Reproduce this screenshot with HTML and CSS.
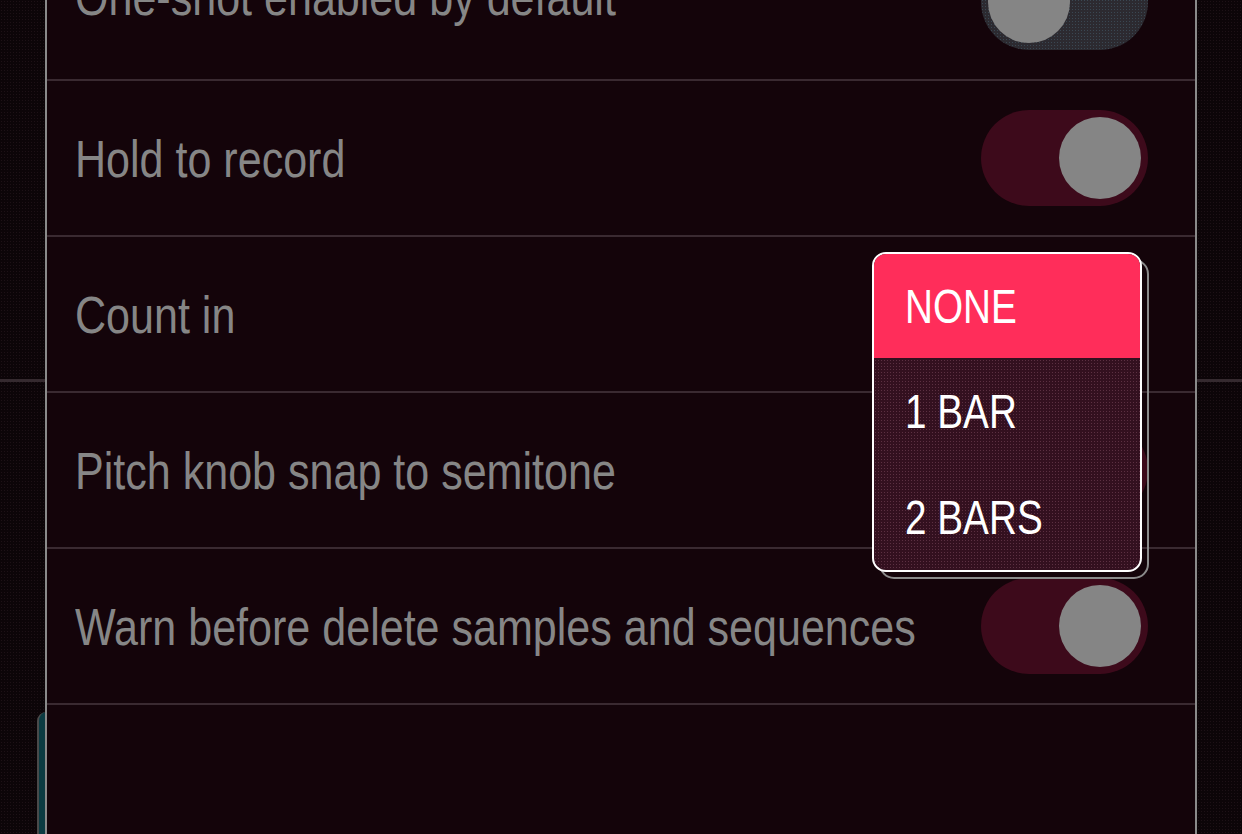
FILE: index.html
```html
<!DOCTYPE html>
<html lang="en">
<head>
<meta charset="utf-8">
<title>Settings</title>
<link rel="stylesheet" href="styles.css">
</head>
<body>
<div class="screen">
  <div class="backdrop">
    <div class="bg-header"></div>
    <div class="bg-body">
      <div class="bg-card"></div>
    </div>
  </div>

  <div class="modal">
    <div class="list">
      <div class="row row-first">
        <span class="label">One-shot enabled by default</span>
        <span class="toggle off"><span class="knob"></span></span>
      </div>
      <div class="row">
        <span class="label">Hold to record</span>
        <span class="toggle on"><span class="knob"></span></span>
      </div>
      <div class="row has-menu">
        <span class="label">Count in</span>
        <div class="menu-wrap">
          <div class="menu-echo"></div>
          <ul class="menu">
            <li class="item selected"><span class="item-text">NONE</span></li>
            <li class="item"><span class="item-text">1 BAR</span></li>
            <li class="item"><span class="item-text">2 BARS</span></li>
          </ul>
        </div>
      </div>
      <div class="row">
        <span class="label">Pitch knob snap to semitone</span>
        <span class="toggle on"><span class="knob"></span></span>
      </div>
      <div class="row">
        <span class="label">Warn before delete samples and sequences</span>
        <span class="toggle on"><span class="knob"></span></span>
      </div>
      <div class="row empty"></div>
    </div>
  </div>
</div>
</body>
</html>
```

FILE: styles.css
```css
* {
  box-sizing: border-box;
}

html, body {
  margin: 0;
  padding: 0;
  background: #0c0508;
  overflow: hidden;
}

.screen {
  position: relative;
  width: 1242px;
  height: 834px;
  overflow: hidden;
  font-family: "Liberation Sans", Arial, sans-serif;
}

/* background page behind the modal */
.backdrop {
  display: flex;
  flex-direction: column;
  height: 100%;
  background-color: #0c0508;
  background-image: radial-gradient(circle, rgba(60, 40, 50, 0.35) 0.6px, transparent 0.9px);
  background-size: 3px 3px;
}

.bg-header {
  flex-shrink: 0;
  height: 382px;
  border-bottom: 3px solid #352a2f;
}

.bg-body {
  flex: 1;
  min-height: 0;
  padding: 330px 0 0 37px;
}

.bg-card {
  width: 60px;
  height: 200px;
  background: #0b3b42;
  border-left: 2px solid #4a4a4a;
  border-radius: 9px 0 0 0;
}

/* modal panel */
.modal {
  position: absolute;
  top: 0;
  left: 45px;
  width: 1152px;
  height: 834px;
  background: #14040a;
  border-left: 2px solid #8a8a8a;
  border-right: 2px solid #8a8a8a;
  overflow: hidden;
}

.list {
  margin-top: -75px;
}

.row {
  position: relative;
  display: flex;
  align-items: center;
  height: 156px;
  padding: 0 47px 0 28px;
  border-bottom: 2px solid #3a2a31;
}

.row.empty {
  border-bottom: none;
}

/* condensed face: Liberation Sans compressed to a narrow width */
.label {
  flex: 1 1 0;
  min-width: 0;
  font-size: 52.5px;
  color: #868686;
  white-space: nowrap;
  transform: scaleX(0.82);
  transform-origin: left center;
}

.row-first .label {
  padding-bottom: 12px;
}

/* toggles */
.toggle {
  display: flex;
  align-items: center;
  width: 167px;
  height: 96px;
  padding: 0 7px;
  border-radius: 48px;
  flex-shrink: 0;
}

.toggle.on {
  background: #3d0a1b;
  justify-content: flex-end;
}

.toggle.off {
  background-color: #2c2a30;
  background-image: radial-gradient(circle, rgba(70, 95, 110, 0.55) 0.6px, transparent 0.9px);
  background-size: 3px 3px;
  justify-content: flex-start;
}

.knob {
  width: 82px;
  height: 82px;
  border-radius: 50%;
  background: #858585;
}

/* dropdown menu */
.menu-wrap {
  position: absolute;
  z-index: 5;
  top: 15px;
  right: 53px;
  width: 270px;
  height: 320px;
}

.menu-echo {
  position: absolute;
  top: 7px;
  left: 7px;
  width: 270px;
  height: 320px;
  border: 2px solid #8a8a8a;
  border-radius: 15px;
}

.menu {
  position: relative;
  display: flex;
  flex-direction: column;
  height: 100%;
  margin: 0;
  padding: 0;
  list-style: none;
  border: 2px solid #ffffff;
  border-radius: 14px;
  overflow: hidden;
  background-color: #33101f;
  background-image: radial-gradient(circle, rgba(120, 70, 90, 0.6) 0.6px, transparent 0.9px);
  background-size: 3px 3px;
}

.item {
  display: flex;
  align-items: center;
  height: 106px;
  padding-left: 31px;
  font-size: 49px;
  color: #ffffff;
}

.item-text {
  white-space: nowrap;
  transform: scaleX(0.79);
  transform-origin: left center;
}

.item.selected {
  height: 104px;
  background: #ff2d5a;
}
```
